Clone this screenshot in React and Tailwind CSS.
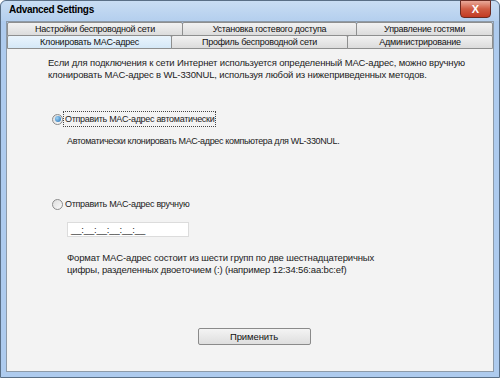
import React from "react";

function Tab({ w, label, active }) {
  return (
    <div
      className={
        "flex items-center justify-center border border-[#8e8f8f] rounded-t-[2px] -ml-px first:ml-0 whitespace-nowrap " +
        (active
          ? "bg-gradient-to-b from-[#eaf4fc] to-[#d5e8f7]"
          : "bg-gradient-to-b from-[#f2f2f2] to-[#dcdcdc]")
      }
      style={{ width: w }}
    >
      <span className="text-[9px] leading-none text-[#111] tracking-[-0.25px]">{label}</span>
    </div>
  );
}

function Radio({ checked }) {
  return (
    <span className="w-[11px] h-[11px] shrink-0 rounded-full border border-[#8b8b8b] bg-gradient-to-br from-[#dcdcdc] to-[#fafafa] flex items-center justify-center">
      {checked && (
        <span className="w-[6px] h-[6px] rounded-full bg-[radial-gradient(circle_at_35%_35%,#9fd3f5,#1e6ab0)]"></span>
      )}
    </span>
  );
}

export default function App() {
  return (
    <div
      className="w-[500px] h-[378px] bg-[#aecbee] border border-[#5a6f86] rounded-t-[6px] flex flex-col text-[#111]"
      style={{ fontFamily: '"Liberation Sans", Arial, sans-serif' }}
    >
      <div className="h-[20px] shrink-0 flex items-start justify-between bg-gradient-to-b from-[#c9ddf3] to-[#b4cfee] rounded-t-[6px]">
        <span className="pl-[8px] pt-[4px] text-[10px] font-bold leading-none tracking-[-0.3px] text-black">Advanced Settings</span>
        <div className="mr-[8px] w-[31px] h-[18px] -mt-px rounded-b-[4px] border border-[#6b2b22] bg-gradient-to-b from-[#e9a99a] via-[#cf5c43] to-[#c23a22] flex items-center justify-center">
          <span className="text-white text-[11px] font-bold leading-none">X</span>
        </div>
      </div>
      <div className="flex-1 mx-[5px] mb-[5px] border border-[#8d9aa8] bg-[#f3f3f3] flex flex-col">
        <div className="flex h-[14px] shrink-0 bg-[#aecbee]">
          <Tab w={176} label="Настройки беспроводной сети" />
          <Tab w={175} label="Установка гостевого доступа" />
          <Tab w={137} label="Управление гостями" />
        </div>
        <div className="flex h-[14px] shrink-0 -mt-px">
          <Tab w={165} label="Клонировать MAC-адрес" active />
          <Tab w={177} label="Профиль беспроводной сети" />
          <Tab w={146} label="Администрирование" />
        </div>
        <div className="flex-1 flex flex-col text-[9.5px] leading-[12px] tracking-[-0.15px] text-[#222] whitespace-nowrap">
          <p className="pl-[41px] pt-[8px]">
            Если для подключения к сети Интернет используется определенный MAC-адрес, можно вручную
            <br />
            клонировать MAC-адрес в WL-330NUL, используя любой из нижеприведенных методов.
          </p>
          <div className="pl-[45px] mt-[30px] flex items-center gap-0">
            <Radio checked />
            <span className="border border-dotted border-[#444] px-[1px] py-[1px] text-[9px] tracking-[-0.3px]">Отправить MAC-адрес автоматически</span>
          </div>
          <p className="pl-[60px] mt-[8px] text-[9px] tracking-[-0.35px]">Автоматически клонировать MAC-адрес компьютера для WL-330NUL.</p>
          <div className="pl-[45px] mt-[49px] flex items-center gap-[2px]">
            <Radio />
            <span className="py-[2px] text-[9px] tracking-[-0.3px]">Отправить MAC-адрес вручную</span>
          </div>
          <div className="ml-[60px] mt-[10px] w-[122px] h-[15px] bg-white border border-[#dcdcdc] flex items-center pl-[3px]">
            <span>__:__:__:__:__:__</span>
          </div>
          <p className="pl-[60px] mt-[15px]">
            Формат MAC-адрес состоит из шести групп по две шестнадцатеричных
            <br />
            цифры, разделенных двоеточием (:) (например 12:34:56:aa:bc:ef)
          </p>
          <div className="mt-[52px] flex justify-center pl-[8px]">
            <button className="w-[113px] h-[17px] border border-[#8a8a8a] rounded-[2px] bg-gradient-to-b from-[#f4f4f4] to-[#dedede] text-[9.5px] leading-none tracking-[-0.1px] text-[#111]">
              Применить
            </button>
          </div>
        </div>
      </div>
    </div>
  );
}
